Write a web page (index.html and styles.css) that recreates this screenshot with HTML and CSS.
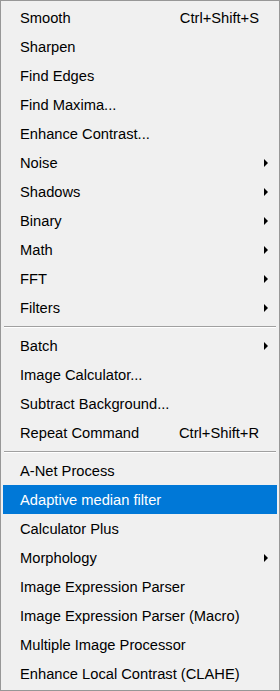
FILE: index.html
```html
<!DOCTYPE html>
<html lang="en">
<head>
    <meta charset="UTF-8">
    <title>Process menu</title>
    <link rel="stylesheet" href="styles.css">
</head>
<body>
    <ul class="menu">
        <li class="menu-item"><span class="label">Smooth</span><span class="shortcut">Ctrl+Shift+S</span></li>
        <li class="menu-item"><span class="label">Sharpen</span></li>
        <li class="menu-item"><span class="label">Find Edges</span></li>
        <li class="menu-item"><span class="label">Find Maxima...</span></li>
        <li class="menu-item"><span class="label">Enhance Contrast...</span></li>
        <li class="menu-item submenu"><span class="label">Noise</span></li>
        <li class="menu-item submenu"><span class="label">Shadows</span></li>
        <li class="menu-item submenu"><span class="label">Binary</span></li>
        <li class="menu-item submenu"><span class="label">Math</span></li>
        <li class="menu-item submenu"><span class="label">FFT</span></li>
        <li class="menu-item submenu"><span class="label">Filters</span></li>
        <li class="separator"></li>
        <li class="menu-item submenu"><span class="label">Batch</span></li>
        <li class="menu-item"><span class="label">Image Calculator...</span></li>
        <li class="menu-item"><span class="label">Subtract Background...</span></li>
        <li class="menu-item"><span class="label">Repeat Command</span><span class="shortcut">Ctrl+Shift+R</span></li>
        <li class="separator"></li>
        <li class="menu-item"><span class="label">A-Net Process</span></li>
        <li class="menu-item active"><span class="label">Adaptive median filter</span></li>
        <li class="menu-item"><span class="label">Calculator Plus</span></li>
        <li class="menu-item submenu"><span class="label">Morphology</span></li>
        <li class="menu-item"><span class="label">Image Expression Parser</span></li>
        <li class="menu-item"><span class="label">Image Expression Parser (Macro)</span></li>
        <li class="menu-item"><span class="label">Multiple Image Processor</span></li>
        <li class="menu-item"><span class="label">Enhance Local Contrast (CLAHE)</span></li>
    </ul>
</body>
</html>
```

FILE: styles.css
```css
body {
    margin: 0;
    padding: 0;
    background-color: #f0f0f0;
    font-family: 'Liberation Sans', Arial, sans-serif;
}

.menu {
    list-style: none;
    margin: 0;
    padding: 2px;
    width: 280px;
    height: 691px;
    box-sizing: border-box;
    border: 1px solid #979797;
    background-color: #f0f0f0;
}

.menu-item {
    position: relative;
    display: flex;
    align-items: center;
    justify-content: space-between;
    height: 29px;
    padding: 0 18px 0 17px;
    font-size: 14.7px;
    color: #000;
    white-space: nowrap;
}

.menu-item.active {
    background-color: #0078d7;
    color: #fff;
}

.shortcut {
    margin-left: 20px;
}

/* small black arrow for items with a submenu */
.submenu::after {
    content: "";
    position: absolute;
    right: 9px;
    top: 11px;
    border-top: 4px solid transparent;
    border-bottom: 4px solid transparent;
    border-left: 4px solid #000;
}

.separator {
    height: 9px;
    display: flex;
    align-items: center;
    padding: 0 1px;
}

.separator::before {
    content: "";
    flex: 1;
    height: 1px;
    background-color: #a0a0a0;
    border-bottom: 1px solid #ffffff;
}
```
